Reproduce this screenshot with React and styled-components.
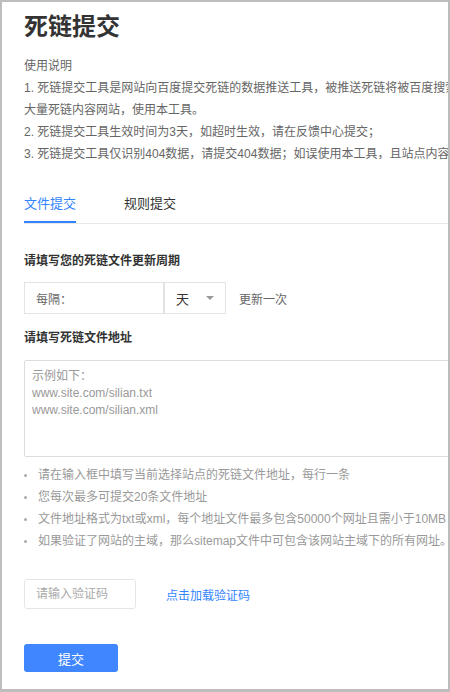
import React from 'react'
import styled, { createGlobalStyle } from 'styled-components'

const GlobalStyle = createGlobalStyle`
    html, body {
        margin: 0;
        padding: 0;
        background: #fff;
    }
    body {
        font-family: "Liberation Sans", "Noto Sans CJK SC", sans-serif;
        -webkit-font-smoothing: antialiased;
    }
`

const Frame = styled.div`
    box-sizing: border-box;
    width: 450px;
    height: 692px;
    border: 2px solid #bdbdbd;
    border-bottom-width: 3px;
    background: #fff;
    overflow: hidden;
`

const Page = styled.div`
    width: 900px;
    padding-left: 22px;
`

const Title = styled.h1`
    margin: 9px 0 0;
    font-size: 24px;
    line-height: 32px;
    font-weight: bold;
    color: #333;
`

const Notes = styled.div`
    margin-top: 12px;
    font-size: 12px;
    line-height: 22px;
    color: #666;
    white-space: nowrap;
`

const TabBar = styled.div`
    display: flex;
    gap: 48px;
    margin-top: 29px;
    border-bottom: 1px solid #e8e8e8;
`

const Tab = styled.div`
    font-size: 13px;
    line-height: 20px;
    padding-bottom: 7px;
    color: ${p => (p.$active ? '#3385ff' : '#333')};
    border-bottom: 2px solid ${p => (p.$active ? '#3385ff' : 'transparent')};
`

const Label = styled.div`
    margin-top: ${p => p.$top}px;
    font-size: 12px;
    line-height: 20px;
    font-weight: bold;
    color: #333;
`

const PeriodRow = styled.div`
    display: flex;
    align-items: center;
    margin-top: 11px;
    height: 32px;
`

const Field = styled.div`
    box-sizing: border-box;
    display: flex;
    align-items: center;
    height: 32px;
    width: ${p => p.$width}px;
    padding: 0 11px;
    border: 1px solid #e3e3e3;
    font-size: 12px;
    color: #666;
`

const Select = styled(Field)`
    justify-content: space-between;
    font-size: 13px;
    color: #333;
`

const Caret = styled.span`
    width: 0;
    height: 0;
    border-left: 4px solid transparent;
    border-right: 4px solid transparent;
    border-top: 4px solid #999;
`

const After = styled.span`
    margin-left: 13px;
    font-size: 12px;
    color: #666;
`

const Area = styled.textarea`
    display: block;
    box-sizing: border-box;
    margin-top: 12px;
    width: 540px;
    height: 97px;
    padding: 7px 7px;
    border: 1px solid #ddd;
    border-radius: 2px;
    resize: none;
    font-family: inherit;
    font-size: 12px;
    line-height: 17px;
    outline: none;
    &::placeholder {
        color: #999;
    }
`

const Tips = styled.ul`
    margin: 7px 0 0;
    padding: 0;
    list-style: none;
    white-space: nowrap;
`

const Tip = styled.li`
    display: flex;
    align-items: center;
    font-size: 12px;
    line-height: 22px;
    color: #999;
    &::before {
        content: '';
        flex: none;
        width: 3px;
        height: 3px;
        border-radius: 50%;
        background: #aaa;
        margin-right: 11px;
    }
`

const CaptchaRow = styled.div`
    display: flex;
    align-items: center;
    gap: 30px;
    margin-top: 27px;
`

const CaptchaInput = styled.input`
    box-sizing: border-box;
    width: 112px;
    height: 30px;
    padding: 0 11px;
    border: 1px solid #e5e5e5;
    border-radius: 3px;
    font-family: inherit;
    font-size: 12px;
    outline: none;
    &::placeholder {
        color: #aaa;
    }
`

const Link = styled.a`
    font-size: 12px;
    color: #3385ff;
    text-decoration: none;
`

const Submit = styled.button`
    display: block;
    margin-top: 35px;
    width: 94px;
    height: 28px;
    border: none;
    border-radius: 3px;
    background: #3f86ff;
    color: #fff;
    font-family: inherit;
    font-size: 13px;
`

export default function App() {
    return (
        <>
            <GlobalStyle />
            <Frame>
                <Page>
                    <Title>死链提交</Title>
                    <Notes>
                        <div>使用说明</div>
                        <div>
                            1. 死链提交工具是网站向百度提交死链的数据推送工具，被推送死链将被百度搜索屏蔽。网站存在大量死链，将影响网站的站点评级，建议对于存在
                        </div>
                        <div>大量死链内容网站，使用本工具。</div>
                        <div>2. 死链提交工具生效时间为3天，如超时生效，请在反馈中心提交；</div>
                        <div>
                            3. 死链提交工具仅识别404数据，请提交404数据；如误使用本工具，且站点内容并非死链，将影响网站在百度搜索中的展现。
                        </div>
                    </Notes>
                    <TabBar>
                        <Tab $active>文件提交</Tab>
                        <Tab>规则提交</Tab>
                    </TabBar>
                    <Label $top={27}>请填写您的死链文件更新周期</Label>
                    <PeriodRow>
                        <Field $width={140}>每隔：</Field>
                        <Select $width={62}>
                            天
                            <Caret />
                        </Select>
                        <After>更新一次</After>
                    </PeriodRow>
                    <Label $top={14}>请填写死链文件地址</Label>
                    <Area
                        placeholder={
                            '示例如下：\nwww.site.com/silian.txt\nwww.site.com/silian.xml'
                        }
                    />
                    <Tips>
                        <Tip>请在输入框中填写当前选择站点的死链文件地址，每行一条</Tip>
                        <Tip>您每次最多可提交20条文件地址</Tip>
                        <Tip>文件地址格式为txt或xml，每个地址文件最多包含50000个网址且需小于10MB</Tip>
                        <Tip>如果验证了网站的主域，那么sitemap文件中可包含该网站主域下的所有网址。</Tip>
                    </Tips>
                    <CaptchaRow>
                        <CaptchaInput placeholder="请输入验证码" />
                        <Link href="#">点击加载验证码</Link>
                    </CaptchaRow>
                    <Submit>提交</Submit>
                </Page>
            </Frame>
        </>
    )
}
